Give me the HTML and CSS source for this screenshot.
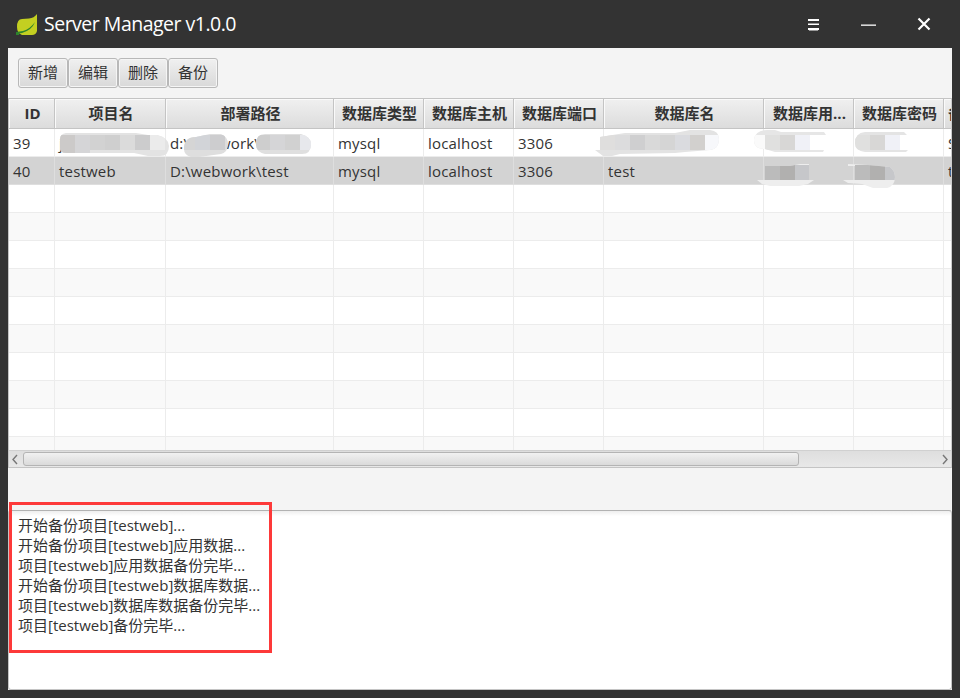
FILE: index.html
```html
<!DOCTYPE html>
<html lang="zh-CN">
<head>
<meta charset="utf-8">
<title>Server Manager v1.0.0</title>
<link rel="stylesheet" href="styles.css">
</head>
<body>
<div class="window">
  <header class="titlebar">
    <svg class="leaf" width="22" height="23" viewBox="0 0 22 23">
      <path fill="#c3cf21" d="M21 0V17Q20 21 16 21H6Q1 19 1 13Q1 5 6 5L13 4.500Q18 4 21 0Z"/>
      <path fill="#2d842c" d="M19 8Q16 16 6 19L3 19.500V21H0V18L7 17Q14 15 19 8Z"/>
    </svg>
    <h1 class="title">Server Manager v1.0.0</h1>
    <svg class="controls" width="124" height="16" viewBox="0 0 124 16">
      <path fill="#fff" d="M0 3h11v2H0zM0 8h11v1H0zM0 12h11v2H0z"/>
      <path fill="#999" d="M0 7h11v1H0zM1 14h9v1H1z"/>
      <path fill="#999" d="M53 8h15v1H53z"/><path fill="#d6d6d6" d="M53 9h15v1H53z"/>
      <path stroke="#fff" stroke-width="2.200" d="M110.500 2.500l11 11M121.500 2.500l-11 11"/>
    </svg>
  </header>
  <main class="content">
    <div class="toolbar">
      <button class="btn">新增</button><button class="btn">编辑</button><button class="btn">删除</button><button class="btn">备份</button>
    </div>
    <section class="table">
      <div class="row head"><div>ID</div><div>项目名</div><div>部署路径</div><div>数据库类型</div><div>数据库主机</div><div>数据库端口</div><div>数据库名</div><div>数据库用...</div><div>数据库密码</div><div>备</div></div>
      <div class="rows">
        <div class="row"><div>39</div><div>j</div><div>d:\webwork\</div><div>mysql</div><div>localhost</div><div>3306</div><div></div><div></div><div></div><div>S</div></div>
        <div class="row selected"><div>40</div><div>testweb</div><div>D:\webwork\test</div><div>mysql</div><div>localhost</div><div>3306</div><div>test</div><div></div><div></div><div>t</div></div>
        <div class="row"><div></div><div></div><div></div><div></div><div></div><div></div><div></div><div></div><div></div><div></div></div>
        <div class="row alt"><div></div><div></div><div></div><div></div><div></div><div></div><div></div><div></div><div></div><div></div></div>
        <div class="row"><div></div><div></div><div></div><div></div><div></div><div></div><div></div><div></div><div></div><div></div></div>
        <div class="row alt"><div></div><div></div><div></div><div></div><div></div><div></div><div></div><div></div><div></div><div></div></div>
        <div class="row"><div></div><div></div><div></div><div></div><div></div><div></div><div></div><div></div><div></div><div></div></div>
        <div class="row alt"><div></div><div></div><div></div><div></div><div></div><div></div><div></div><div></div><div></div><div></div></div>
        <div class="row"><div></div><div></div><div></div><div></div><div></div><div></div><div></div><div></div><div></div><div></div></div>
        <div class="row alt"><div></div><div></div><div></div><div></div><div></div><div></div><div></div><div></div><div></div><div></div></div>
        <div class="row"><div></div><div></div><div></div><div></div><div></div><div></div><div></div><div></div><div></div><div></div></div>
        <div class="row alt"><div></div><div></div><div></div><div></div><div></div><div></div><div></div><div></div><div></div><div></div></div>
      </div>
      <div class="scrollbar">
        <svg width="14" height="17" viewBox="0 0 14 17"><path d="M8 4L4 8.500L8 13" fill="none" stroke="#777" stroke-width="1.400"/></svg>
        <div class="track"><div class="thumb"></div></div>
        <svg width="14" height="17" viewBox="0 0 14 17"><path d="M6 4L10 8.500L6 13" fill="none" stroke="#777" stroke-width="1.400"/></svg>
      </div>
      <svg class="masks" width="944" height="100" viewBox="8 98 944 100">
        <defs>
          <clipPath id="m1"><path d="M60 139Q60 134 66 133H136L148 135H157Q169 138 169 146Q169 156 160 156H148L134 153H66Q60 153 60 148Z"/></clipPath>
          <clipPath id="m2"><path d="M184 149Q184 137 196 137L210 134H221Q228 137 228 144Q228 152 221 154L199 157H191Q184 155 184 149Z"/></clipPath>
          <clipPath id="m3"><path d="M256 144Q256 134 265 134H301Q311 137 311 144Q311 154 302 154H265Q256 152 256 144Z"/></clipPath>
          <clipPath id="m4"><path d="M595 150H600V137L625 133H675L690 130H710Q719 131 719 139Q719 149 710 150L685 152L675 153L620 154L612 156H603Z"/></clipPath>
          <clipPath id="m5"><path d="M754 139Q756 130 767 130H775L781 132H824L826 135H810V150H824L823 152H775L765 149Q754 149 754 141Z"/></clipPath>
          <clipPath id="m6"><path d="M855 143Q855 133 865 132H904L907 135H900V150H908L906 152H865Q855 151 855 143Z"/></clipPath>
          <clipPath id="m7"><path d="M757 180H765V166H790L800 164H809V180H814L808 184L799 186H770L762 184Z"/></clipPath>
          <clipPath id="m8"><path d="M843 180H855V166H848V164L868 165L890 167Q895 171 895 177Q895 186 887 188H873L862 184L848 183Z"/></clipPath>
        </defs>
        <g clip-path="url(#m1)"><path fill="#e3e3e3" d="M55 130h120v30H55z"/><path fill="#cccac9" d="M60 135h15v18H60z"/><path fill="#d5d5d7" d="M75 135h15v18H75z"/><path fill="#d2d2d2" d="M90 135h15v15H90z"/><path fill="#cfcfcf" d="M105 135h15v15h-15z"/><path fill="#dbdbdb" d="M120 135h15v15h-15z"/><path fill="#cccccd" d="M135 135h15v15h-15z"/><path fill="#ebebeb" d="M150 135h15v15h-15z"/></g>
        <g clip-path="url(#m2)"><path fill="#dedede" d="M184 130h50v30h-50z"/><path fill="#d5d5d5" d="M184 135h11v15h-11z"/><path fill="#d2d4d8" d="M195 135h15v15h-15z"/><path fill="#cdcdcf" d="M210 135h15v15h-15z"/></g>
        <g clip-path="url(#m3)"><path fill="#dfdfdf" d="M250 130h65v30h-65z"/><path fill="#cecece" d="M255 135h15v15h-15z"/><path fill="#d5d5d7" d="M270 135h15v15h-15z"/><path fill="#d1d1d1" d="M285 135h15v15h-15z"/><path fill="#e7e8ec" d="M300 135h11v15h-11z"/></g>
        <g clip-path="url(#m4)"><path fill="#e3e3e3" d="M590 128h130v30H590z"/><path fill="#dfdedd" d="M600 135h15v15h-15z"/><path fill="#dcdcdd" d="M615 135h15v15h-15z"/><path fill="#cfcfd0" d="M630 135h15v15h-15z"/><path fill="#d9d9d9" d="M645 135h15v15h-15z"/><path fill="#d5d5d5" d="M660 135h15v15h-15z"/><path fill="#dadbdf" d="M675 135h15v15h-15z"/><path fill="#d2d0ce" d="M690 135h15v15h-15z"/><path fill="#f7f8fb" d="M705 135h15v15h-15z"/></g>
        <g clip-path="url(#m5)"><path fill="#e6e6e6" d="M750 128h80v30h-80z"/><path fill="#fafafa" d="M750 135h15v15h-15z"/><path fill="#e0e0df" d="M765 135h15v15h-15z"/><path fill="#d8d7d6" d="M780 135h15v15h-15z"/><path fill="#f0f1f7" d="M795 135h15v15h-15z"/></g>
        <g clip-path="url(#m6)"><path fill="#e4e4e4" d="M850 128h60v30h-60z"/><path fill="#e0e0df" d="M855 135h15v15h-15z"/><path fill="#d8d7d6" d="M870 135h15v15h-15z"/><path fill="#f0f1f7" d="M885 135h15v15h-15z"/></g>
        <g clip-path="url(#m7)"><path fill="#eee" d="M750 160h70v30h-70z"/><path fill="#bbb" d="M765 165h15v15h-15z"/><path fill="#b1b0af" d="M780 165h15v15h-15z"/><path fill="#c6c7ca" d="M795 165h15v15h-15z"/></g>
        <g clip-path="url(#m8)"><path fill="#eee" d="M840 160h60v30h-60z"/><path fill="#bbb" d="M855 165h15v15h-15z"/><path fill="#b1b0af" d="M870 165h15v15h-15z"/><path fill="#c6c7ca" d="M885 165h15v15h-15z"/></g>
      </svg>
    </section>
    <section class="log">
      <p>开始备份项目[testweb]...</p>
      <p>开始备份项目[testweb]应用数据...</p>
      <p>项目[testweb]应用数据备份完毕...</p>
      <p>开始备份项目[testweb]数据库数据...</p>
      <p>项目[testweb]数据库数据备份完毕...</p>
      <p>项目[testweb]备份完毕...</p>
      <div class="highlight"></div>
    </section>
  </main>
</div>
</body>
</html>
```
FILE: styles.css
```css
* { box-sizing: border-box; }
body { margin: 0; background: #333; color: #333; font: 15px/20px "Open Sans", "Noto Sans CJK SC", sans-serif; }
.window { width: 960px; height: 698px; padding: 0 8px 8px; display: flex; flex-direction: column; overflow: hidden; }
.titlebar { height: 48px; flex: none; display: flex; align-items: center; padding: 0 20px 0 8px; }
.leaf { margin-top: 2px; }
.title { margin: 0 auto 0 6px; font-size: 19.500px; font-weight: 400; letter-spacing: -0.500px; color: #fff; line-height: 26px; white-space: nowrap; }
.controls { display: block; }
.content { flex: 1; display: flex; flex-direction: column; background: #f4f4f4; }
.toolbar { height: 50px; padding: 10px 10px 0; display: flex; }
.btn { width: 50px; height: 30px; padding: 0 0 2px; border: 1px solid #b8b8b8; border-radius: 3px; background: linear-gradient(#f0f0f0, #d9d9d9); box-shadow: inset 0 0 0 1px #f5f5f5; color: #333; font: inherit; }
.table { position: relative; height: 370px; border: 1px solid #c4c4c4; border-right-color: #ccc; display: flex; flex-direction: column; background: #fff; }
.row { display: grid; grid-template-columns: 46px 111px 168px 90px 90px 90px 160px 90px 90px 8px; height: 28px; flex: none; overflow: hidden; letter-spacing: 0.180px; }
.row > div { border-right: 1px solid #ececec; border-bottom: 1px solid #ececec; padding: 4px 0 0 4px; white-space: nowrap; overflow: hidden; }
.row > div:last-child { border-right: 0; }
.head { height: 30px; font-weight: 700; letter-spacing: 0; }
.head > div { padding: 4px 0 0 2px; text-align: center; border-color: #c4c4c4; background: linear-gradient(#f0f0f0, #dcdcdc); box-shadow: inset 1px 1px #fafafa; }
.head > div:last-child { padding-left: 4px; text-align: left; }
.rows { height: 321px; overflow: hidden; }
.alt { background: #f9f9f9; }
.selected { background: #d3d3d3; }
.selected > div { border-color: #dedede; }
.scrollbar { height: 17px; flex: none; border-top: 1px solid #d0d0d0; background: linear-gradient(#dedede, #e8e8e8); display: flex; }
.scrollbar svg { flex: none; }
.track { flex: 1; padding-top: 1px; }
.thumb { width: 776px; height: 14px; border: 1px solid #b4b4b4; border-radius: 3px; background: linear-gradient(#f1f1f1, #dadada); }
.masks { position: absolute; left: -1px; top: -1px; }
.log { position: relative; height: 180px; margin-top: 42px; padding: 4px 9px; border: 1px solid #c4c4c4; border-top-color: #b2b2b2; border-radius: 3px; background: linear-gradient(#eee, #fff 5px); }
.log p { margin: 0; }
.highlight { position: absolute; left: 0; top: -9px; width: 263px; height: 151px; border: 3px solid #fd3939; }
```
